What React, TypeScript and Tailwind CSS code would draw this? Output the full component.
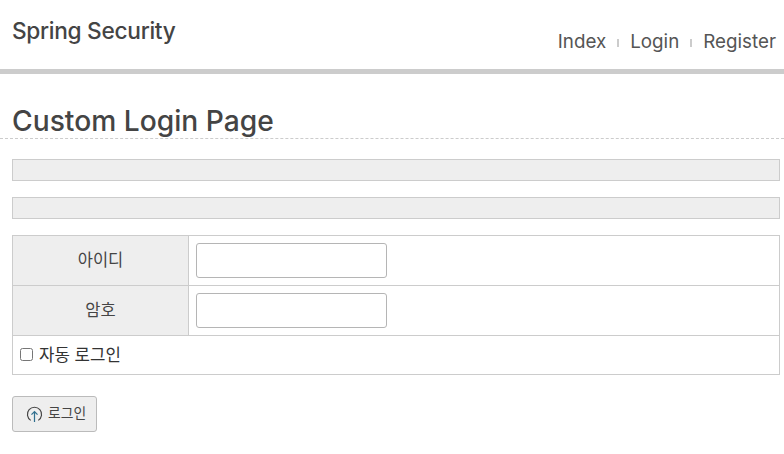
const font = "font-['Inter','Noto_Sans_CJK_KR',sans-serif]";

export default function App() {
  const navLinks = ['Index', 'Login', 'Register'];

  return (
    <div className={`min-h-screen bg-white text-[#444] ${font}`}>
      {/* Header */}
      <header className="h-[74px] border-b-[5px] border-[#ccc] pl-3 pr-2 flex justify-between">
        <div className="pt-[17px] text-[22.7px] leading-7 font-medium tracking-[-0.3px]">Spring Security</div>
        <nav className="pt-[31px] flex items-start text-[18.8px] leading-[22px] text-[#555]">
          {navLinks.map((link, i) => (
            <div key={link} className="flex items-center">
              {i > 0 && <span className="mx-[11px] mt-px w-0.5 h-2 bg-[#ccc]" />}
              <a>{link}</a>
            </div>
          ))}
        </nav>
      </header>

      <main className="pl-3 pr-1">
        {/* Title */}
        <h1 className="-ml-3 -mr-1 pl-3 h-[65px] pt-[29px] border-b border-dashed border-[#ccc] text-[28.2px] leading-9 font-medium">
          Custom Login Page
        </h1>

        <div className="mt-5 h-[22px] bg-[#eee] border border-[#ccc]" />
        <div className="mt-4 h-[22px] bg-[#eee] border border-[#ccc]" />

        {/* Login form */}
        <table className="mt-4 w-full border-collapse text-[16.5px]">
          <tbody>
            <tr className="h-[50px]">
              <th className="w-[176px] bg-[#eee] border border-[#ccc] font-normal">아이디</th>
              <td className="border border-[#ccc] px-[7px]">
                <input className="block w-[191px] h-[35px] bg-white border border-[#b5b5b5] rounded-[3px]" />
              </td>
            </tr>
            <tr className="h-[50px]">
              <th className="bg-[#eee] border border-[#ccc] font-normal">암호</th>
              <td className="border border-[#ccc] px-[7px]">
                <input type="password" className="block w-[191px] h-[35px] bg-white border border-[#b5b5b5] rounded-[3px]" />
              </td>
            </tr>
            <tr className="h-[39px]">
              <td colSpan={2} className="border border-[#ccc] px-[7px]">
                <label className="flex items-center gap-[6px] pt-[2px] text-[16.8px] text-[#333]">
                  <input type="checkbox" className="w-[13px] h-[13px] mb-[4px]" />
                  자동 로그인
                </label>
              </td>
            </tr>
          </tbody>
        </table>

        <button className="mt-[21px] w-[85px] h-9 bg-[#eee] border border-[#bbb] rounded-[3px] flex items-center pl-[13px] gap-[5px] text-[13.8px] text-[#444]">
          <svg width="17" height="17" viewBox="0 0 18 18" fill="none">
            <path d="M5 15.2A7.5 7.5 0 1 1 13 15.2" stroke="#444" strokeWidth="1.2" />
            <path d="M9 17V6M5.8 9.2 9 6l3.2 3.2" stroke="#2f6f8f" strokeWidth="1.3" />
          </svg>
          <span className="mb-[2px]">로그인</span>
        </button>
      </main>
    </div>
  );
}
